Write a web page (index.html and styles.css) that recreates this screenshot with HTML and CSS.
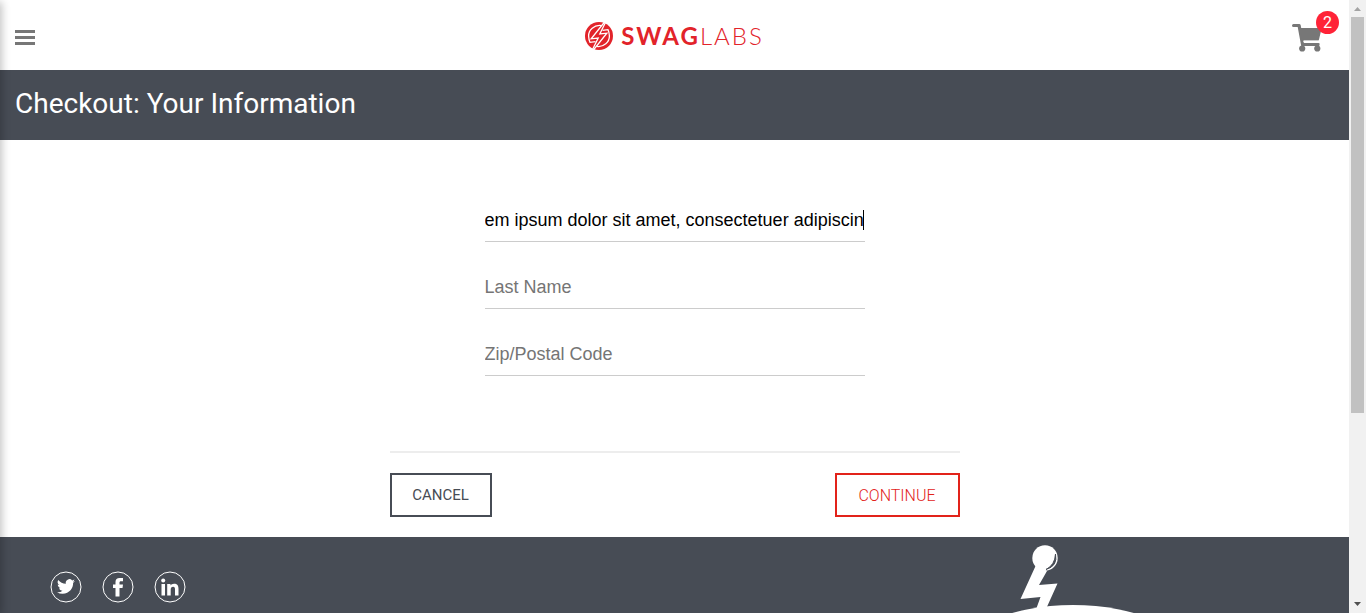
FILE: index.html
```
<!DOCTYPE html>
<html lang="en">
<head>
<meta charset="utf-8">
<meta name="viewport" content="width=device-width, initial-scale=1">
<title>Swag Labs</title>
<link rel="stylesheet" href="styles.css">
</head>
<body>
<div class="page">
  <header class="topbar">
    <button class="menu-button" type="button" aria-label="Open menu"><span></span><span></span><span></span></button>
    <div class="logo">
      <svg class="logo-mark" viewBox="0 0 28 28" aria-hidden="true">
        <circle cx="14" cy="14" r="14" fill="#e2232a"/>
        <g fill="none" stroke="#fff" stroke-width="1.3">
          <path d="M19.500 0L6.200 16.800L13.200 16.100L7.300 28"/>
          <path d="M20.700 0L14.800 11.900L21.800 11.200L8.500 28"/>
          <path d="M16.500 3.600C9 2.500 3.500 8 3.600 14Q3.800 18 5 20.300L10.500 19.700"/>
          <path d="M11.500 24.400C19 25.500 24.500 20 24.400 14Q24.200 10 23 7.700L17.500 8.300"/>
        </g>
      </svg>
      <span class="logo-text"><b>SWAG</b>LABS</span>
    </div>
    <a class="cart" href="#" aria-label="Shopping cart">
      <svg class="cart-icon" viewBox="0 0 30 28" fill="#777" aria-hidden="true">
        <path d="M1.500 0H7.200Q8.400 0 8.700 1.200L9.200 4H28.400Q29.700 4 29.400 5.300L27 15.400Q26.700 16.600 25.500 16.600H11.600L12 19H26.300Q28 19 27.600 20.400L27.200 22H9.200L5.700 3H1.500Q0 3 0 1.500T1.500 0Z"/>
        <circle cx="10.200" cy="24.500" r="3.100"/><circle cx="25.300" cy="24.500" r="3.100"/>
        <path d="M11.400 17.500H26.400" stroke="#fff" stroke-width="1.500"/>
      </svg>
      <span class="badge">2</span>
    </a>
  </header>
  <div class="titlebar"><h1>Checkout: Your Information</h1></div>
  <form class="checkout">
    <div class="fields">
      <div class="field"><input type="text" aria-label="First Name" placeholder="First Name" value="em ipsum dolor sit amet, consectetuer adipiscin"><span class="caret"></span></div>
      <div class="field"><input type="text" aria-label="Last Name" placeholder="Last Name"></div>
      <div class="field"><input type="text" aria-label="Zip/Postal Code" placeholder="Zip/Postal Code"></div>
    </div>
    <div class="actions">
      <button class="action cancel" type="button">CANCEL</button>
      <button class="action continue" type="submit">CONTINUE</button>
    </div>
  </form>
  <footer class="footer">
    <nav class="social">
      <a href="#" aria-label="Twitter"><svg viewBox="0 0 32 32"><circle cx="16" cy="16" r="15" fill="none" stroke="#fff"/><path fill="#fff" transform="translate(7 6.500) scale(.75)" d="M23.9 4.6c-.9.4-1.800.7-2.800.8 1-.6 1.800-1.600 2.200-2.700-1 .6-2 1-3.100 1.200a4.900 4.900 0 0 0-8.400 4.500C7.700 8.200 4.100 6.300 1.700 3.200a4.900 4.900 0 0 0 1.500 6.600c-.8 0-1.600-.2-2.200-.6v.1c0 2.400 1.700 4.400 3.900 4.800-.7.2-1.500.2-2.200.1.600 2 2.400 3.400 4.600 3.400A9.900 9.900 0 0 1 0 19.500a14 14 0 0 0 7.500 2.200c9.100 0 14.300-7.700 14-14.600 1-.7 1.800-1.600 2.400-2.500Z"/></svg></a>
      <a href="#" aria-label="Facebook"><svg viewBox="0 0 32 32"><circle cx="16" cy="16" r="15" fill="none" stroke="#fff"/><path fill="#fff" d="M13.500 25.500V17H11V13.500H13.500V11C13.500 8.300 15 7 17.600 7H21V10.300H19C17.900 10.300 17.500 10.800 17.500 11.800V13.500H21L20.500 17H17.500V25.500Z"/></svg></a>
      <a href="#" aria-label="LinkedIn"><svg viewBox="0 0 32 32"><circle cx="16" cy="16" r="15" fill="none" stroke="#fff"/><path fill="#fff" d="M7.500 13H11V24.500H7.500ZM13.200 13H16.500V14.600C17.200 13.400 18.400 12.700 20 12.700C23.300 12.700 24.500 14.500 24.500 18V24.500H21V18.500C21 16.700 20.600 15.700 19.100 15.700C17.400 15.700 16.700 16.900 16.700 18.600V24.500H13.200Z"/><circle cx="9.200" cy="9.600" r="2" fill="#fff"/></svg></a>
    </nav>
    <svg class="robot" viewBox="0 0 170 76" aria-hidden="true">
      <g fill="#fff">
        <path d="M46 28 57 34 49 48 67.500 46.500 56 72 44 78 50.500 60 30.500 62Z"/>
        <circle cx="55" cy="21" r="12.700"/>
        <ellipse cx="83" cy="123" rx="117" ry="55"/>
      </g>
      <path d="M65.500 17Q68 29 56 32.500Q65 28 65.500 17Z" fill="#474c55" stroke="#474c55"/>
    </svg>
  </footer>
  <div class="drawer"></div>
</div>
<div class="scrollbar" aria-hidden="true">
  <svg viewBox="0 0 17 17"><path d="M5 11 8.500 7 12 11Z" fill="#a3a3a3"/></svg>
  <div class="track"><div class="thumb"></div></div>
  <svg viewBox="0 0 17 17"><path d="M5 6H12L8.500 10Z" fill="#505050"/></svg>
</div>
</body>
</html>
```
FILE: styles.css
```
* { box-sizing: border-box; }
body {
  margin: 0;
  height: 100vh;
  display: flex;
  overflow: hidden;
  background: #fff;
  font-family: Roboto, "Liberation Sans", sans-serif;
}
.page {
  flex: 1;
  min-width: 0;
  display: flex;
  flex-direction: column;
  overflow: hidden;
}
.topbar {
  display: grid;
  grid-template-columns: 1fr auto 1fr;
  align-items: center;
  flex: none;
  height: 70px;
  padding: 0 15px;
}
.menu-button {
  display: flex;
  flex-direction: column;
  gap: 3px;
  width: 20px;
  margin-top: 5px;
  padding: 0;
  border: 0;
  background: none;
}
.menu-button span { height: 3px; width: 20px; background: #777; }
.logo { display: flex; align-items: center; gap: 8px; padding-top: 2px; color: #e2232a; }
.logo-mark { width: 28px; height: 28px; }
.logo-text { font: 300 24px/30px Lato, sans-serif; letter-spacing: 2px; }
.logo-text b { font-weight: 700; }
.cart { position: relative; justify-self: end; width: 42px; height: 28px; margin-top: 6px; }
.cart-icon { display: block; width: 30px; height: 28px; }
.badge {
  position: absolute;
  top: -13px;
  right: -5px;
  width: 23px;
  height: 23px;
  border-radius: 50%;
  background: #ff2337;
  color: #fff;
  font-size: 16px;
  line-height: 23px;
  text-align: center;
}
.titlebar { flex: none; padding: 17px 15px 20px; background: #474c55; }
.titlebar h1 { margin: 0; color: #fff; font-size: 28px; font-weight: 400; line-height: 33px; }
.checkout { flex: none; width: 100%; max-width: 570px; margin: 0 auto; padding: 60px 0 20px; }
.fields { display: grid; gap: 25px; max-width: 380px; margin: 0 auto 75px; }
.field { position: relative; height: 42px; }
.field input {
  display: block;
  width: 100%;
  height: 100%;
  padding: 0 0 1px;
  border: 0;
  border-bottom: 1px solid #ccc;
  outline: 0;
  background: none;
  color: #000;
  font: 18px "Liberation Sans", Arial, sans-serif;
}
.field input::placeholder { color: #757575; opacity: 1; }
.caret { position: absolute; top: 10px; right: 1px; width: 1px; height: 20px; background: #000; }
.actions { display: flex; justify-content: space-between; padding-top: 20px; border-top: 2px solid #ededed; }
.action {
  height: 44px;
  padding: 0 20px;
  border: 2px solid;
  background: #fff;
}
.cancel { color: #474c55; font: 400 15px Roboto, sans-serif; min-width: 102px; }
.continue { color: #e2231a; font: 300 16px Roboto, sans-serif; min-width: 125px; }
.footer {
  flex: 1 0 auto;
  display: flex;
  justify-content: space-between;
  padding: 0 189px 0 50px;
  background: #474c55;
}
.social { display: flex; gap: 20px; padding-top: 34px; }
.social a, .social svg { display: block; width: 32px; height: 32px; }
.robot { width: 170px; height: 76px; }
.drawer {
  position: fixed;
  top: 4px;
  bottom: 0;
  left: -20px;
  width: 20px;
  box-shadow: 0 0 8px 2px rgba(0, 0, 0, .24);
}
.scrollbar { flex: none; display: flex; flex-direction: column; width: 17px; background: #f1f1f1; }
.scrollbar svg { flex: none; width: 17px; height: 17px; }
.track { flex: 1; padding: 0 2px; }
.thumb { height: 68.4%; background: #c1c1c1; }
```
